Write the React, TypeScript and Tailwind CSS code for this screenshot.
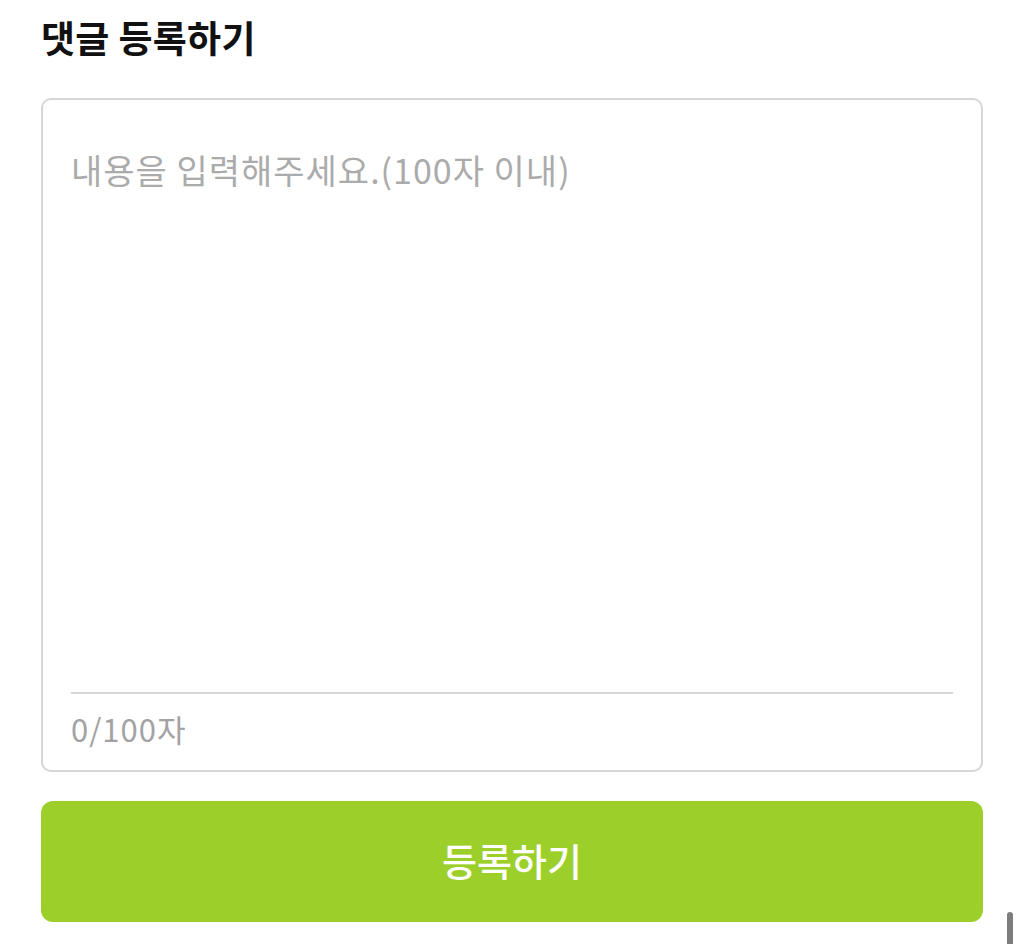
import * as React from "react";
import { useState } from "react";

const font = { fontFamily: '"Noto Sans CJK KR", "Noto Sans", sans-serif' };

export default function App() {
  const [text, setText] = useState("");

  return (
    <div className="relative min-h-[944px] bg-white" style={font}>
      <div className="px-[41px] pt-[12px]">
        <h2 className="text-[37px] leading-[50px] font-bold text-[#111] tracking-[0.3px]">댓글 등록하기</h2>

        <div className="mt-[36px] h-[674px] rounded-[10px] border-2 border-[#d6d6d6] flex flex-col px-[28px]">
          <textarea
            value={text}
            onChange={(e) => setText(e.target.value.slice(0, 100))}
            placeholder="내용을 입력해주세요.(100자 이내)"
            className="flex-1 resize-none pt-[48px] text-[34px] leading-[44px] tracking-[1px] text-[#333] placeholder:text-[#ababab] outline-none bg-transparent"
          />
          <div className="border-t-2 border-[#d6d6d6] h-[78px] flex items-center pb-[6px]">
            <span className="text-[31px] tracking-[1px] text-[#a3a3a3]">{text.length}/100자</span>
          </div>
        </div>

        <button className="mt-[29px] w-full h-[121px] rounded-[12px] bg-[#9ccf29] text-white text-[38px] font-medium pb-[4px]">
          등록하기
        </button>
      </div>

      {/* scroll indicator */}
      <div className="absolute right-[11px] top-[912px] w-[6px] h-[40px] rounded-full bg-[#7d7d7d]" />
    </div>
  );
}
